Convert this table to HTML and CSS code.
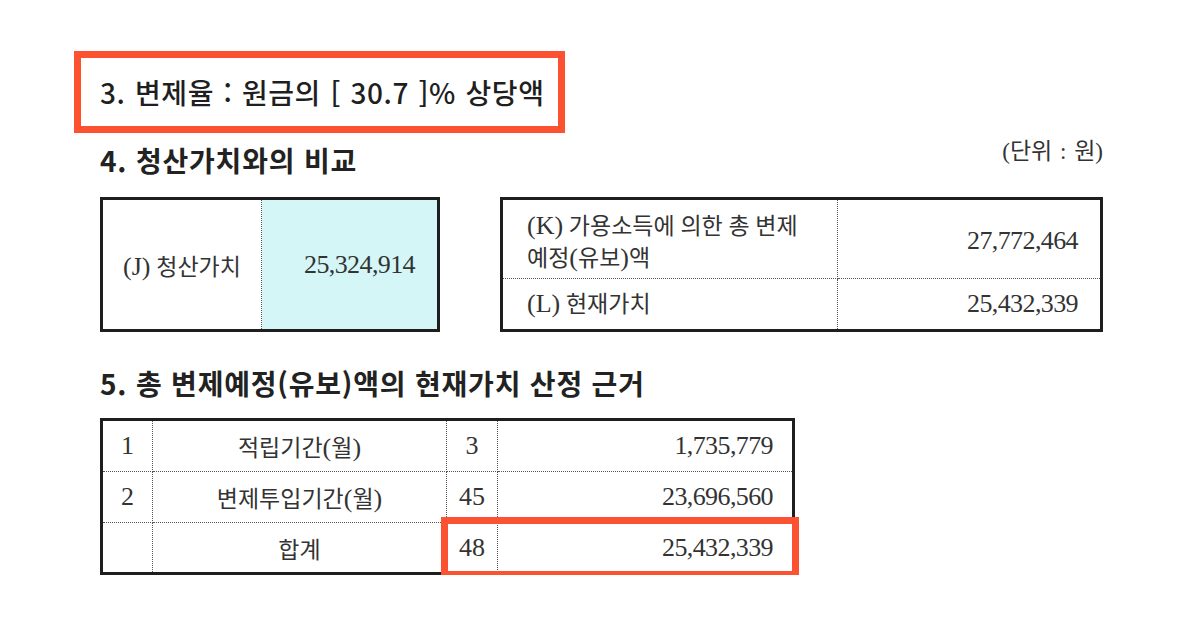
FILE: index.html
```html
<!DOCTYPE html>
<html lang="ko">
<head>
<meta charset="utf-8">
<title>변제율 및 청산가치 비교</title>
<link rel="stylesheet" href="styles.css">
</head>
<body>
<div class="page">
  <div class="rate-box">
    <h2 class="h-rate">3. 변제율 : 원금의 [ 30.7 ]% 상당액</h2>
  </div>

  <div class="sec4-head">
    <h2 class="h-sec">4. 청산가치와의 비교</h2>
    <span class="unit">(단위 : 원)</span>
  </div>

  <div class="compare">
    <table class="tbl t-j">
      <colgroup><col class="c-j1"><col class="c-j2"></colgroup>
      <tr>
        <td class="center"><span class="lat">(J)</span> 청산가치</td>
        <td class="num cyan last-c">25,324,914</td>
      </tr>
    </table>

    <table class="tbl t-kl">
      <colgroup><col class="c-k1"><col class="c-k2"></colgroup>
      <tr class="r-k">
        <td class="left k-cell"><span class="lat">(K)</span> 가용소득에 의한 총 변제<br>예정<span class="lat">(</span>유보<span class="lat">)</span>액</td>
        <td class="num last-c k-num">27,772,464</td>
      </tr>
      <tr class="r-l last-r">
        <td class="left"><span class="lat">(L)</span> 현재가치</td>
        <td class="num last-c">25,432,339</td>
      </tr>
    </table>
  </div>

  <h2 class="h-sec h5">5. 총 변제예정(유보)액의 현재가치 산정 근거</h2>

  <div class="t3-wrap">
    <table class="tbl t3">
      <colgroup><col class="c-31"><col class="c-32"><col class="c-33"><col class="c-34"></colgroup>
      <tr class="r-31">
        <td class="center lat">1</td>
        <td class="center">적립기간<span class="lat">(</span>월<span class="lat">)</span></td>
        <td class="center lat">3</td>
        <td class="num last-c">1,735,779</td>
      </tr>
      <tr class="r-32">
        <td class="center lat">2</td>
        <td class="center">변제투입기간<span class="lat">(</span>월<span class="lat">)</span></td>
        <td class="center lat">45</td>
        <td class="num last-c">23,696,560</td>
      </tr>
      <tr class="r-33 last-r">
        <td class="center"></td>
        <td class="center">합계</td>
        <td class="center lat">48</td>
        <td class="num last-c">25,432,339</td>
      </tr>
    </table>
    <div class="hl"></div>
  </div>
</div>
</body>
</html>
```

FILE: styles.css
```css
* { box-sizing: border-box; }

html, body {
  margin: 0;
  padding: 0;
  background: #ffffff;
}

body {
  font-family: "Noto Sans CJK KR", sans-serif;
  color: #222;
}

.page {
  padding: 51px 0 0 100px;
  width: 1103px;
}

h2 { margin: 0; }

.rate-box {
  margin-left: -26px;
  width: 491px;
  height: 82px;
  border: 7px solid #fd5232;
  display: flex;
  align-items: center;
  padding-left: 19px;
}

.h-rate {
  font-size: 28px;
  font-weight: 500;
  line-height: 36px;
  color: #1f1f1f;
  letter-spacing: 0.6px;
  word-spacing: 1px;
}

.sec4-head {
  margin-top: 9px;
  display: flex;
  justify-content: space-between;
  align-items: flex-start;
  height: 36px;
}

.h-sec {
  font-size: 28px;
  font-weight: 700;
  line-height: 36px;
  color: #222;
  letter-spacing: 0.8px;
}

.unit {
  font-family: "Liberation Serif", "Noto Sans CJK KR", serif;
  font-size: 23px;
  line-height: 20px;
  color: #333;
  word-spacing: 2px;
}

.compare {
  margin-top: 19px;
  display: flex;
  gap: 60px;
}

.tbl {
  border: 3px solid #1e1e1e;
  border-collapse: separate;
  border-spacing: 0;
  table-layout: fixed;
  font-family: "Liberation Serif", "Noto Sans CJK KR", serif;
  font-size: 23px;
  color: #333;
}

.tbl td {
  padding: 0;
  border-right: 1px dotted #555;
  border-bottom: 1px dotted #555;
  vertical-align: middle;
}

.tbl td.last-c { border-right: none; }
.tbl tr.last-r td { border-bottom: none; }
.t-j td { border-bottom: none; }

.lat { font-size: 26px; }

.center { text-align: center; }
.left { text-align: left; padding-left: 24px !important; line-height: 31px; }
.num {
  text-align: right;
  font-size: 26px;
  letter-spacing: -0.6px;
  padding-right: 22px !important;
}

.cyan { background: #d4f6f6; }

/* table J */
.t-j { width: 340px; height: 135px; }
.c-j1 { width: 159px; }
.c-j2 { width: 175px; }

/* table K/L */
.t-kl { width: 603px; height: 135px; }
.c-k1 { width: 335px; }
.c-k2 { width: 262px; }
.r-k td { height: 79px; }
.r-l td { height: 50px; }
.k-cell { padding-top: 6px !important; }
.k-num { padding-top: 4px !important; }

.h5 { margin-top: 33px; }

/* table 3 */
.t3-wrap {
  position: relative;
  margin-top: 17px;
  width: 700px;
}

.t3 { width: 695px; height: 157px; }
.c-31 { width: 50px; }
.c-32 { width: 294px; }
.c-33 { width: 51px; }
.c-34 { width: 294px; }
.r-31 td, .r-32 td { height: 51px; }
.r-33 td { height: 49px; }
.t3 .num { padding-right: 19px !important; }

.hl {
  position: absolute;
  left: 341px;
  top: 99px;
  width: 358px;
  height: 61px;
  border: 7px solid #fd5232;
  pointer-events: none;
}
```
